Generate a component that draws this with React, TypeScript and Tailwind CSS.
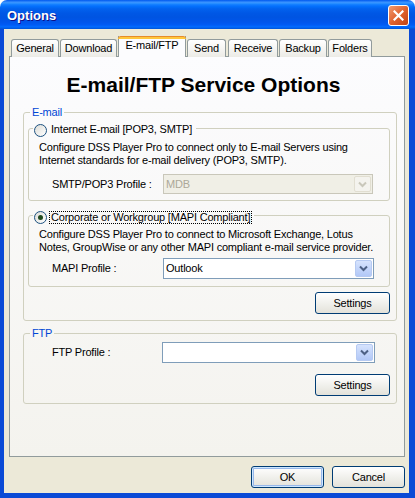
import React from 'react';

const FONT = "font-['Liberation_Sans',Arial,sans-serif]";

function Chevron({ disabled }: { disabled?: boolean }) {
  return (
    <svg width="9" height="7" viewBox="0 0 9 7">
      <path
        d="M1 1.5 L4.5 5 L8 1.5"
        fill="none"
        stroke={disabled ? '#C9C7BA' : '#4D6185'}
        strokeWidth="2"
      />
    </svg>
  );
}

function Combo({ value, disabled, width, height }: { value?: string; disabled?: boolean; width: string; height: string }) {
  return (
    <div
      className={`flex ${width} ${height} items-stretch border ${
        disabled ? 'border-[#C9C7BA] bg-[#F0EFE6]' : 'border-[#7F9DB9] bg-white'
      }`}
    >
      <div className={`flex flex-1 items-center pl-[2px] ${disabled ? 'text-[#ACA899]' : 'text-black'}`}>{value}</div>
      <div
        className={`m-[1px] flex w-[17px] items-center justify-center rounded-[2px] border ${
          disabled
            ? 'border-[#E1DED1] bg-[#F4F3EE]'
            : 'border-[#B6CAF2] bg-linear-to-b from-[#D6E3FD] to-[#B2C8F7]'
        }`}
      >
        <Chevron disabled={disabled} />
      </div>
    </div>
  );
}

function Radio({ checked }: { checked?: boolean }) {
  return (
    <span className="flex h-[13px] w-[13px] shrink-0 items-center justify-center rounded-full border border-[#1C5180] bg-linear-to-br from-[#DCDCD7] to-white">
      {checked && <span className="h-[5px] w-[5px] rounded-full bg-[#1F4A1F]" />}
    </span>
  );
}

function Button({ label, primary }: { label: string; primary?: boolean }) {
  return (
    <div
      className={`flex h-[22px] items-center justify-center rounded-[3px] border border-[#003C74] bg-linear-to-b from-white to-[#E3E2DA] text-black ${
        primary ? 'shadow-[inset_0_0_0_1px_#CEE7FF,inset_0_0_0_2px_#98B8EA]' : ''
      }`}
    >
      {label}
    </div>
  );
}

const tabs = [
  { label: 'General', w: 'w-[48px]', ml: 'ml-0' },
  { label: 'Download', w: 'w-[57px]', ml: 'ml-[1px]' },
  { label: 'E-mail/FTP', w: 'w-[68px]', ml: 'ml-[1px]', active: true },
  { label: 'Send', w: 'w-[39px]', ml: 'ml-[1px]' },
  { label: 'Receive', w: 'w-[50px]', ml: 'ml-[2px]' },
  { label: 'Backup', w: 'w-[48px]', ml: 'ml-[1px]' },
  { label: 'Folders', w: 'w-[44px]', ml: 'ml-[1px]' },
];

export default function App() {
  return (
    <div className={`${FONT} flex h-[498px] w-[415px] flex-col bg-white text-[11px] leading-[13px] tracking-[-0.2px] text-black`}>
      {/* Title bar */}
      <div className="flex h-[29px] shrink-0 items-center justify-between rounded-t-[7px] bg-[linear-gradient(to_bottom,#0058EE_0%,#3A93FF_8%,#288EFF_12%,#127DFF_16%,#036FFC_22%,#0262EE_30%,#0057E5_46%,#0054E2_60%,#0055EB_76%,#005BF5_86%,#026AFE_92%,#0062EF_96%,#0052D6_100%)] pl-[7px] pr-[6px] pt-[2px]">
        <span className="text-[13px] font-bold leading-[16px] tracking-normal text-white [text-shadow:1px_1px_#0F1089]">Options</span>
        <div className="flex h-[21px] w-[21px] items-center justify-center rounded-[3px] border border-white bg-linear-to-br from-[#F09A6E] via-[#E0632F] to-[#C2410F]">
          <svg width="11" height="11" viewBox="0 0 11 11">
            <path d="M1.5 1.5 L9.5 9.5 M9.5 1.5 L1.5 9.5" stroke="white" strokeWidth="2.2" strokeLinecap="square" />
          </svg>
        </div>
      </div>

      {/* Body */}
      <div className="flex flex-1 flex-col border-b-[5px] border-l-[4px] border-r-[6px] border-[#0A4AD6] bg-[#ECE9D8] pt-[7px]">
        {/* Tabs */}
        <div className="relative z-10 ml-[7px] flex h-[21px] items-end">
          {tabs.map((t) =>
            t.active ? (
              <div
                key={t.label}
                className={`${t.w} ${t.ml} flex h-[21px] flex-col border-x border-[#919B9C] bg-[#FCFCFE]`}
              >
                <div className="mx-[-1px] h-[3px] rounded-t-[3px] border-t border-[#E68B2C] bg-[#FFC73C]" />
                <div className="text-center leading-[13px]">{t.label}</div>
              </div>
            ) : (
              <div
                key={t.label}
                className={`${t.w} ${t.ml} h-[18px] rounded-t-[3px] border border-b-0 border-[#919B9C] bg-linear-to-b from-white to-[#ECEBE6] pt-[2px] text-center`}
              >
                {t.label}
              </div>
            )
          )}
        </div>

        {/* Panel */}
        <div className="ml-[5px] mt-[-1px] h-[401px] w-[396px] border border-[#919B9C] bg-linear-to-b from-[#FCFCFE] to-[#F4F3EE]">
          <div className="mt-[16px] pr-[7px] text-center text-[21px] font-bold leading-[24px] tracking-normal">E-mail/FTP Service Options</div>

          {/* E-mail group */}
          <fieldset className="ml-[13px] mt-[9px] w-[374px] rounded-[3px] border border-[#D0D0BF] pb-[6px]">
            <legend className="ml-[6px] px-[2px] leading-[13px] text-[#0046D5]">E-mail</legend>

            <fieldset className="ml-[4px] mt-[1px] w-[362px] rounded-[3px] border border-[#D0D0BF] pb-[6px]">
              <legend className="ml-[4px] pl-[1px] pr-[2px]">
                <div className="flex h-[17px] items-end">
                  <Radio />
                  <span className="ml-[2px] border border-transparent px-[1px] leading-[13px]">Internet E-mail [POP3, SMTP]</span>
                </div>
              </legend>
              <div className="mt-[4px] pl-[10px] leading-[13px]">
                Configure DSS Player Pro to connect only to E-mail Servers using
                <br />
                Internet standards for e-mail delivery (POP3, SMTP).
              </div>
              <div className="mt-[7px] flex items-center pl-[23px]">
                <span className="w-[111px]">SMTP/POP3 Profile :</span>
                <Combo value="MDB" disabled width="w-[210px]" height="h-[20px]" />
              </div>
            </fieldset>

            <fieldset className="ml-[4px] mt-[6px] w-[362px] rounded-[3px] border border-[#D0D0BF] pb-[7px]">
              <legend className="ml-[4px] pl-[1px] pr-[2px]">
                <div className="flex h-[17px] items-end">
                  <Radio checked />
                  <span className="ml-[2px] border border-dotted border-black px-[1px] leading-[11px]">
                    Corporate or Workgroup [MAPI Compliant]
                  </span>
                </div>
              </legend>
              <div className="mt-[4px] pl-[10px] leading-[13px]">
                Configure DSS Player Pro to connect to Microsoft Exchange, Lotus
                <br />
                Notes, GroupWise or any other MAPI compliant e-mail service provider.
              </div>
              <div className="mt-[4px] flex items-center pl-[23px]">
                <span className="w-[111px]">MAPI Profile :</span>
                <Combo value="Outlook" width="w-[211px]" height="h-[21px]" />
              </div>
            </fieldset>

            <div className="ml-[4px] mt-[5px] flex w-[362px] justify-end">
              <div className="w-[75px]">
                <Button label="Settings" />
              </div>
            </div>
          </fieldset>

          {/* FTP group */}
          <fieldset className="ml-[13px] mt-[6px] w-[374px] rounded-[3px] border border-[#D0D0BF] pb-[7px]">
            <legend className="ml-[6px] px-[2px] leading-[13px] text-[#0046D5]">FTP</legend>
            <div className="mt-[2px] flex items-center pl-[28px]">
              <span className="w-[110px]">FTP Profile :</span>
              <Combo width="w-[213px]" height="h-[21px]" />
            </div>
            <div className="mt-[11px] flex justify-end pr-[6px]">
              <div className="w-[75px]">
                <Button label="Settings" />
              </div>
            </div>
          </fieldset>
        </div>

        {/* Bottom buttons */}
        <div className="mt-[9px] flex justify-end gap-[8px] pr-[4px]">
          <div className="w-[73px]">
            <Button label="OK" primary />
          </div>
          <div className="w-[73px]">
            <Button label="Cancel" />
          </div>
        </div>
      </div>
    </div>
  );
}
